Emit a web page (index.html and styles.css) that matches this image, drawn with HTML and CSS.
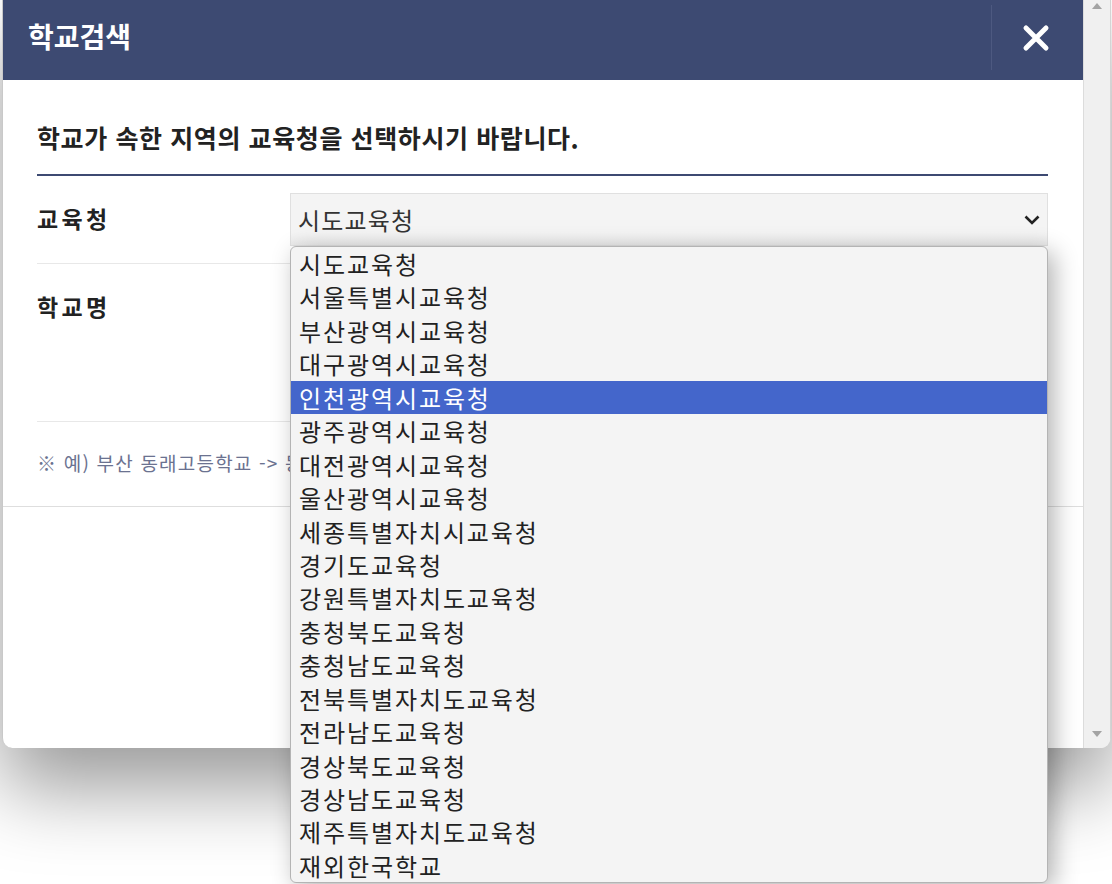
FILE: index.html
```html
<!DOCTYPE html>
<html lang="ko">

<head>
    <meta charset="UTF-8">
    <meta name="viewport" content="width=device-width, initial-scale=1.0">
    <title>학교검색</title>
    <link rel="stylesheet" href="styles.css">
</head>

<body>
    <div class="modal">
        <div class="modal_inner">
            <div class="modal_head">
                <h1 class="modal_title">학교검색</h1>
                <button type="button" class="btn_close" aria-label="닫기">
                    <svg width="28" height="28" viewBox="0 0 28 28">
                        <path d="M4 4 L24 24 M24 4 L4 24" stroke="#fff" stroke-width="5" stroke-linecap="round" fill="none"/>
                    </svg>
                </button>
            </div>

            <div class="modal_body">
                <p class="guide">학교가 속한 지역의 교육청을 선택하시기 바랍니다.</p>

                <div class="form_row">
                    <div class="form_label">교육청</div>
                    <div class="form_field">
                        <div class="select_box">
                            <span class="select_value">시도교육청</span>
                            <svg class="select_arrow" width="16" height="10" viewBox="0 0 16 10">
                                <path d="M1.5 1.5 L8 8 L14.5 1.5" stroke="#222" stroke-width="2.6" fill="none"/>
                            </svg>
                            <!-- 펼쳐진 옵션 목록 -->
                            <ul class="select_list">
                                <li>시도교육청</li>
                                <li>서울특별시교육청</li>
                                <li>부산광역시교육청</li>
                                <li>대구광역시교육청</li>
                                <li class="on">인천광역시교육청</li>
                                <li>광주광역시교육청</li>
                                <li>대전광역시교육청</li>
                                <li>울산광역시교육청</li>
                                <li>세종특별자치시교육청</li>
                                <li>경기도교육청</li>
                                <li>강원특별자치도교육청</li>
                                <li>충청북도교육청</li>
                                <li>충청남도교육청</li>
                                <li>전북특별자치도교육청</li>
                                <li>전라남도교육청</li>
                                <li>경상북도교육청</li>
                                <li>경상남도교육청</li>
                                <li>제주특별자치도교육청</li>
                                <li>재외한국학교</li>
                            </ul>
                        </div>
                    </div>
                </div>

                <div class="form_row">
                    <div class="form_label">학교명</div>
                    <div class="form_field">
                        <div class="input_box"></div>
                        <div class="btn_search"></div>
                    </div>
                </div>

                <p class="note">※ 예) 부산 동래고등학교 -&gt; 동래고</p>
            </div>

            <div class="modal_foot"></div>
        </div>

        <div class="scrollbar">
            <svg width="10" height="6" viewBox="0 0 10 6"><path d="M0 6 L5 0 L10 6 Z" fill="#a3a3a3"/></svg>
            <svg width="10" height="6" viewBox="0 0 10 6"><path d="M0 0 L10 0 L5 6 Z" fill="#a3a3a3"/></svg>
        </div>
    </div>
</body>

</html>
```

FILE: styles.css
```css
* {
    box-sizing: border-box;
}

html,
body {
    min-height: 884px;
}

body {
    margin: 0;
    background-color: #fff;
    font-family: "Noto Sans CJK KR", "Noto Sans", sans-serif;
    color: #222;
}

/* 모달 */
.modal {
    display: flex;
    width: 1109px;
    height: 748px;
    margin-left: 2px;
    background-color: #fff;
    border-left: 1px solid #c9c9c9;
    border-right: 1px solid #d4d4d4;
    border-radius: 0 0 10px 10px;
    box-shadow: 0 40px 80px rgba(0, 0, 0, 0.4);
}

.modal_inner {
    flex: 1;
    min-width: 0;
    display: flex;
    flex-direction: column;
}

.modal_head {
    display: flex;
    height: 80px;
    padding-left: 25px;
    background-color: #3d4a72;
}

.modal_title {
    flex: 1;
    margin: 0;
    font-size: 28px;
    font-weight: 700;
    line-height: 72px;
    color: #fff;
}

.btn_close {
    display: flex;
    align-items: center;
    justify-content: center;
    width: 88px;
    margin: 5px 4px 10px 0;
    padding: 0;
    border: none;
    border-left: 1px solid #4d5980;
    background: none;
    cursor: pointer;
}

.modal_body {
    padding: 40px 35px 30px 34px;
    border-bottom: 1px solid #dedede;
}

.guide {
    margin: 0;
    padding-bottom: 20px;
    border-bottom: 2px solid #3d4a72;
    font-size: 25px;
    font-weight: 700;
    letter-spacing: 0.6px;
    line-height: 34px;
    color: #222;
}

.form_row {
    display: flex;
    padding: 17px 0;
    border-bottom: 1px solid #e8e8e8;
}

.form_label {
    width: 253px;
    font-size: 23px;
    font-weight: 700;
    letter-spacing: 3.3px;
    line-height: 50px;
    color: #222;
}

.form_field {
    flex: 1;
    display: flex;
    flex-direction: column;
    gap: 15px;
}

.select_box {
    position: relative;
    display: flex;
    align-items: center;
    height: 53px;
    padding: 0 7px;
    background: linear-gradient(#f4f4f4 75%, #ebebeb);
    border: 1px solid #e0e0e0;
    font-size: 24px;
    letter-spacing: 1.2px;
    color: #333;
}

.select_arrow {
    margin-left: auto;
}

/* 옵션 목록 */
.select_list {
    position: absolute;
    top: 52px;
    left: -1px;
    right: -1px;
    z-index: 5;
    margin: 0;
    padding: 0;
    list-style: none;
    background-color: #f4f4f4;
    border: 1px solid #b4b4b4;
    border-radius: 6px;
    box-shadow: 6px 6px 24px rgba(0, 0, 0, 0.3);
}

.select_list li {
    height: 33.44px;
    padding-left: 8px;
    font-size: 24px;
    letter-spacing: 1.9px;
    line-height: 33.44px;
    color: #222;
    white-space: nowrap;
}

.select_list li.on {
    background-color: #4466cb;
    color: #fff;
}

.input_box {
    height: 53px;
    border: 1px solid #ddd;
    background-color: #fff;
}

.btn_search {
    height: 55px;
    border-left: 2px solid #3d4a72;
    background-color: #fff;
}

.note {
    margin: 0;
    padding-top: 28px;
    font-size: 19px;
    letter-spacing: 1.2px;
    line-height: 26px;
    color: #6b7290;
}

.modal_foot {
    flex: 1;
}

/* 스크롤바 */
.scrollbar {
    display: flex;
    flex-direction: column;
    justify-content: space-between;
    align-items: center;
    width: 27px;
    padding: 3px 0 11px;
    background-color: #f0f0f0;
    border-left: 1px solid #dcdcdc;
    border-radius: 0 0 9px 0;
}
```
